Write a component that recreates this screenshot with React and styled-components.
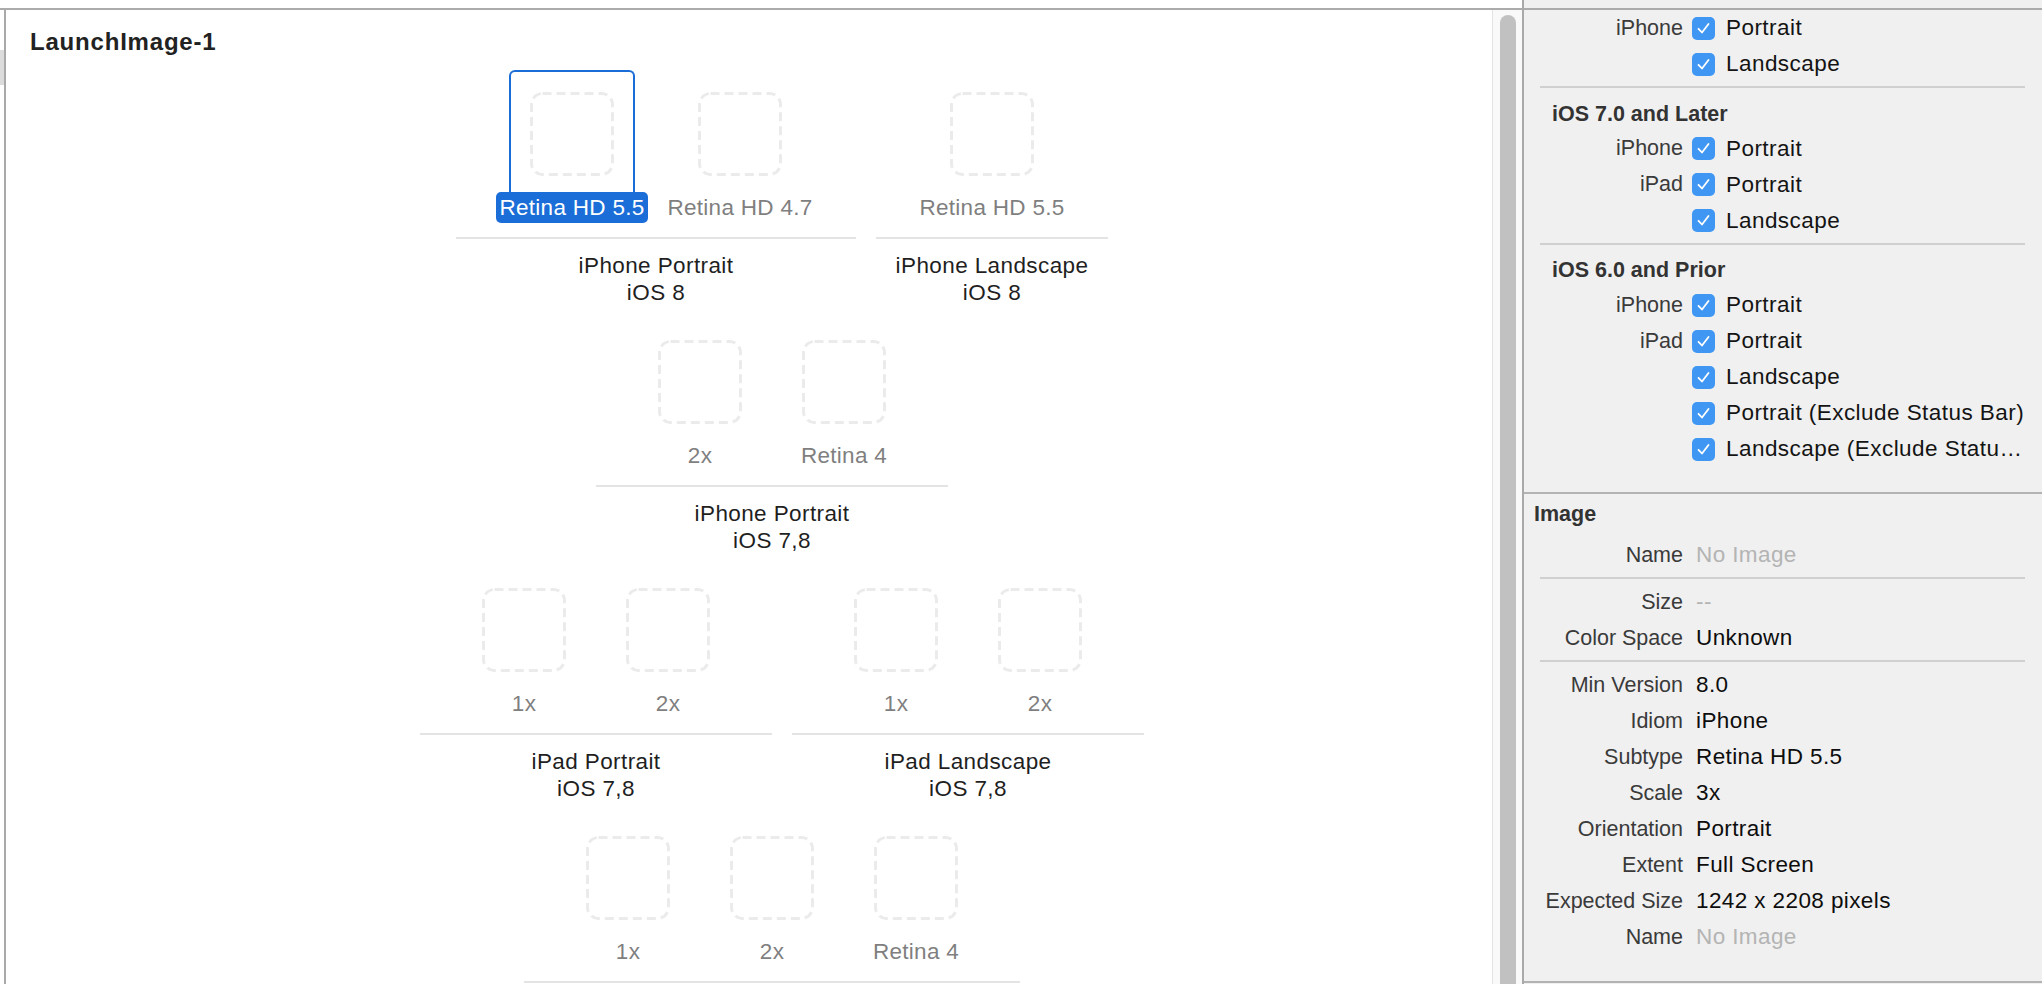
import React from 'react';
import styled, { createGlobalStyle } from 'styled-components';

const GlobalStyle = createGlobalStyle`
  html, body, #root {
    margin: 0;
    height: 100%;
  }

  body {
    font-family: "Liberation Sans", Arial, sans-serif;
    background: #ffffff;
    overflow: hidden;
  }

  * {
    box-sizing: border-box;
  }
`;

const Window = styled.div`
  display: flex;
  width: 2042px;
  height: 984px;
  overflow: hidden;
`;

/* ---------- asset catalog canvas ---------- */

const EditorPane = styled.div`
  display: flex;
  flex-direction: column;
  width: 1522px;
  flex-shrink: 0;
  padding-top: 8px;
  background: #ffffff;
`;

const EditorBody = styled.div`
  display: flex;
  flex: 1;
  min-height: 0;
  border-top: 2px solid #ababab;
`;

const Gutter = styled.div`
  width: 4px;
  flex-shrink: 0;

  &::before {
    content: '';
    display: block;
    margin-top: 40px;
    height: 35px;
    background: #dcdcdc;
  }
`;

const Canvas = styled.div`
  flex: 1;
  padding-top: 17px;
  border-left: 2px solid #a9a9a9;
  overflow: hidden;
`;

const SetName = styled.h1`
  margin: 0 0 13px 24px;
  font-size: 24px;
  line-height: 30px;
  font-weight: 700;
  letter-spacing: 0.8px;
  color: #222222;
`;

const Rows = styled.div`
  display: flex;
  flex-direction: column;
  gap: 12px;
  padding-left: 46px;
`;

const Row = styled.div`
  display: flex;
  justify-content: center;
  gap: 20px;
  padding-left: ${(p) => p.$shift || 0}px;
`;

const Group = styled.div`
  display: flex;
  flex-direction: column;
`;

const Items = styled.div`
  display: flex;
  padding: 0 32px;
`;

const Item = styled.div`
  display: flex;
  flex-direction: column;
  align-items: center;
  width: ${(p) => p.$width}px;
`;

const Frame = styled.div`
  display: flex;
  justify-content: center;
  width: 126px;
  height: 122px;
  padding-top: 20px;
  border: 2px solid ${(p) => (p.$selected ? '#1a6dd6' : 'transparent')};
  border-bottom: none;
  border-radius: 6px 6px 0 0;
`;

const ItemLabel = styled.div`
  height: 31px;
  padding: 0 3px;
  border-radius: 5px;
  font-size: 22.5px;
  line-height: 31px;
  letter-spacing: 0.3px;
  white-space: nowrap;
  background: ${(p) => (p.$selected ? '#1b6dd7' : 'transparent')};
  color: ${(p) => (p.$selected ? '#ffffff' : '#7f7f7f')};
`;

const GroupRule = styled.div`
  height: 2px;
  margin-top: 14px;
  background: #e4e4e4;
`;

const GroupTitle = styled.div`
  margin-top: 13px;
  font-size: 22.5px;
  line-height: 27px;
  letter-spacing: 0.4px;
  text-align: center;
  color: #1f1f1f;
`;

const ScrollTrack = styled.div`
  display: flex;
  width: 30px;
  flex-shrink: 0;
  padding: 5px 6px 0 7px;
  border-left: 1px solid #e3e3e3;
  background: #f9f9f9;
`;

const ScrollThumb = styled.div`
  width: 16px;
  border-radius: 8px 8px 0 0;
  background: #c1c1c1;
`;

const PaneDivider = styled.div`
  width: 2px;
  flex-shrink: 0;
  background: #a9a9a9;
`;

/* ---------- attributes inspector ---------- */

const Inspector = styled.div`
  display: flex;
  flex-direction: column;
  flex: 1;
  padding-top: 8px;
  background: #f0f0f0;
`;

const InspectorBody = styled.div`
  flex: 1;
  border-top: 2px solid #ababab;
`;

const Section = styled.div`
  padding-bottom: ${(p) => p.$bottom || 0}px;
  border-bottom: ${(p) => (p.$closed ? '2px solid #b3b3b3' : 'none')};
`;

const SubHeading = styled.div`
  padding: 9.5px 0 6px 28px;
  font-size: 21.5px;
  line-height: 22px;
  font-weight: 700;
  color: #333333;
`;

const Heading = styled.div`
  padding: 9px 0 12px 10px;
  font-size: 21.5px;
  line-height: 22px;
  font-weight: 700;
  color: #333333;
`;

const InsetRule = styled.div`
  height: 2px;
  margin: 4px 17px 5px 16px;
  background: #d0d0d0;
`;

const Field = styled.div`
  display: grid;
  grid-template-columns: 159px 1fr;
  align-items: center;
  height: 36px;
`;

const FieldLabel = styled.span`
  font-size: 21.5px;
  text-align: right;
  white-space: nowrap;
  color: #3a3a3a;
`;

const FieldValue = styled.span`
  margin-left: 13px;
  font-size: 22.5px;
  letter-spacing: 0.4px;
  white-space: nowrap;
  color: ${(p) => (p.$muted ? '#b4b4b4' : '#0d0d0d')};
`;

const CheckField = styled.label`
  display: flex;
  align-items: center;
  gap: 11px;
  margin-left: 9px;
  font-size: 22.5px;
  letter-spacing: 0.45px;
  white-space: nowrap;
  color: #141414;
`;

const Box = styled.span`
  display: flex;
  align-items: center;
  justify-content: center;
  width: 23px;
  height: 23px;
  flex-shrink: 0;
  border-radius: 5px;
  background: #3f97f3;
`;

const Slot = () => (
  <svg width="84" height="84" viewBox="0 0 84 84">
    <rect
      x="1.5"
      y="1.5"
      width="81"
      height="81"
      rx="11"
      fill="none"
      stroke="#ebebeb"
      strokeWidth="3"
      strokeDasharray="9 5"
    />
  </svg>
);

const Checkbox = () => (
  <Box>
    <svg width="15" height="15" viewBox="0 0 15 15">
      <path d="M2.5 7.8 L6 11.5 L12.5 3" fill="none" stroke="#ffffff" strokeWidth="1.8" strokeLinecap="round" strokeLinejoin="round" />
    </svg>
  </Box>
);

const rows = [
  {
    shift: 20,
    groups: [
      {
        title: ['iPhone Portrait', 'iOS 8'],
        width: 168,
        items: [{ label: 'Retina HD 5.5', selected: true }, { label: 'Retina HD 4.7' }],
      },
      { title: ['iPhone Landscape', 'iOS 8'], width: 168, items: [{ label: 'Retina HD 5.5' }] },
    ],
  },
  {
    groups: [{ title: ['iPhone Portrait', 'iOS 7,8'], width: 144, items: [{ label: '2x' }, { label: 'Retina 4' }] }],
  },
  {
    shift: 20,
    groups: [
      { title: ['iPad Portrait', 'iOS 7,8'], width: 144, items: [{ label: '1x' }, { label: '2x' }] },
      { title: ['iPad Landscape', 'iOS 7,8'], width: 144, items: [{ label: '1x' }, { label: '2x' }] },
    ],
  },
  {
    groups: [{ title: [], width: 144, items: [{ label: '1x' }, { label: '2x' }, { label: 'Retina 4' }] }],
  },
];

const CheckRow = ({ label, text }) => (
  <Field>
    <FieldLabel>{label}</FieldLabel>
    <CheckField>
      <Checkbox />
      {text}
    </CheckField>
  </Field>
);

const ValueRow = ({ label, value, muted }) => (
  <Field>
    <FieldLabel>{label}</FieldLabel>
    <FieldValue $muted={muted}>{value}</FieldValue>
  </Field>
);

const App = () => (
  <Window>
    <GlobalStyle />
    <EditorPane>
      <EditorBody>
        <Gutter />
        <Canvas>
          <SetName>LaunchImage-1</SetName>
          <Rows>
            {rows.map((row, r) => (
              <Row key={r} $shift={row.shift}>
                {row.groups.map((group, g) => (
                  <Group key={g}>
                    <Items>
                      {group.items.map((item, i) => (
                        <Item key={i} $width={group.width}>
                          <Frame $selected={item.selected}>
                            <Slot />
                          </Frame>
                          <ItemLabel $selected={item.selected}>{item.label}</ItemLabel>
                        </Item>
                      ))}
                    </Items>
                    <GroupRule />
                    {group.title.length > 0 && (
                      <GroupTitle>
                        {group.title[0]}
                        <br />
                        {group.title[1]}
                      </GroupTitle>
                    )}
                  </Group>
                ))}
              </Row>
            ))}
          </Rows>
        </Canvas>
        <ScrollTrack>
          <ScrollThumb />
        </ScrollTrack>
      </EditorBody>
    </EditorPane>
    <PaneDivider />
    <Inspector>
      <InspectorBody>
        <Section>
          <CheckRow label="iPhone" text="Portrait" />
          <CheckRow label="" text="Landscape" />
          <InsetRule />
          <SubHeading>iOS 7.0 and Later</SubHeading>
          <CheckRow label="iPhone" text="Portrait" />
          <CheckRow label="iPad" text="Portrait" />
          <CheckRow label="" text="Landscape" />
          <InsetRule />
        </Section>
        <Section $bottom={25} $closed>
          <SubHeading>iOS 6.0 and Prior</SubHeading>
          <CheckRow label="iPhone" text="Portrait" />
          <CheckRow label="iPad" text="Portrait" />
          <CheckRow label="" text="Landscape" />
          <CheckRow label="" text="Portrait (Exclude Status Bar)" />
          <CheckRow label="" text="Landscape (Exclude Statu…" />
        </Section>
        <Section $bottom={26} $closed>
          <Heading>Image</Heading>
          <ValueRow label="Name" value="No Image" muted />
          <InsetRule />
          <ValueRow label="Size" value="--" muted />
          <ValueRow label="Color Space" value="Unknown" />
          <InsetRule />
          <ValueRow label="Min Version" value="8.0" />
          <ValueRow label="Idiom" value="iPhone" />
          <ValueRow label="Subtype" value="Retina HD 5.5" />
          <ValueRow label="Scale" value="3x" />
          <ValueRow label="Orientation" value="Portrait" />
          <ValueRow label="Extent" value="Full Screen" />
          <ValueRow label="Expected Size" value="1242 x 2208 pixels" />
          <ValueRow label="Name" value="No Image" muted />
        </Section>
      </InspectorBody>
    </Inspector>
  </Window>
);

export default App;
